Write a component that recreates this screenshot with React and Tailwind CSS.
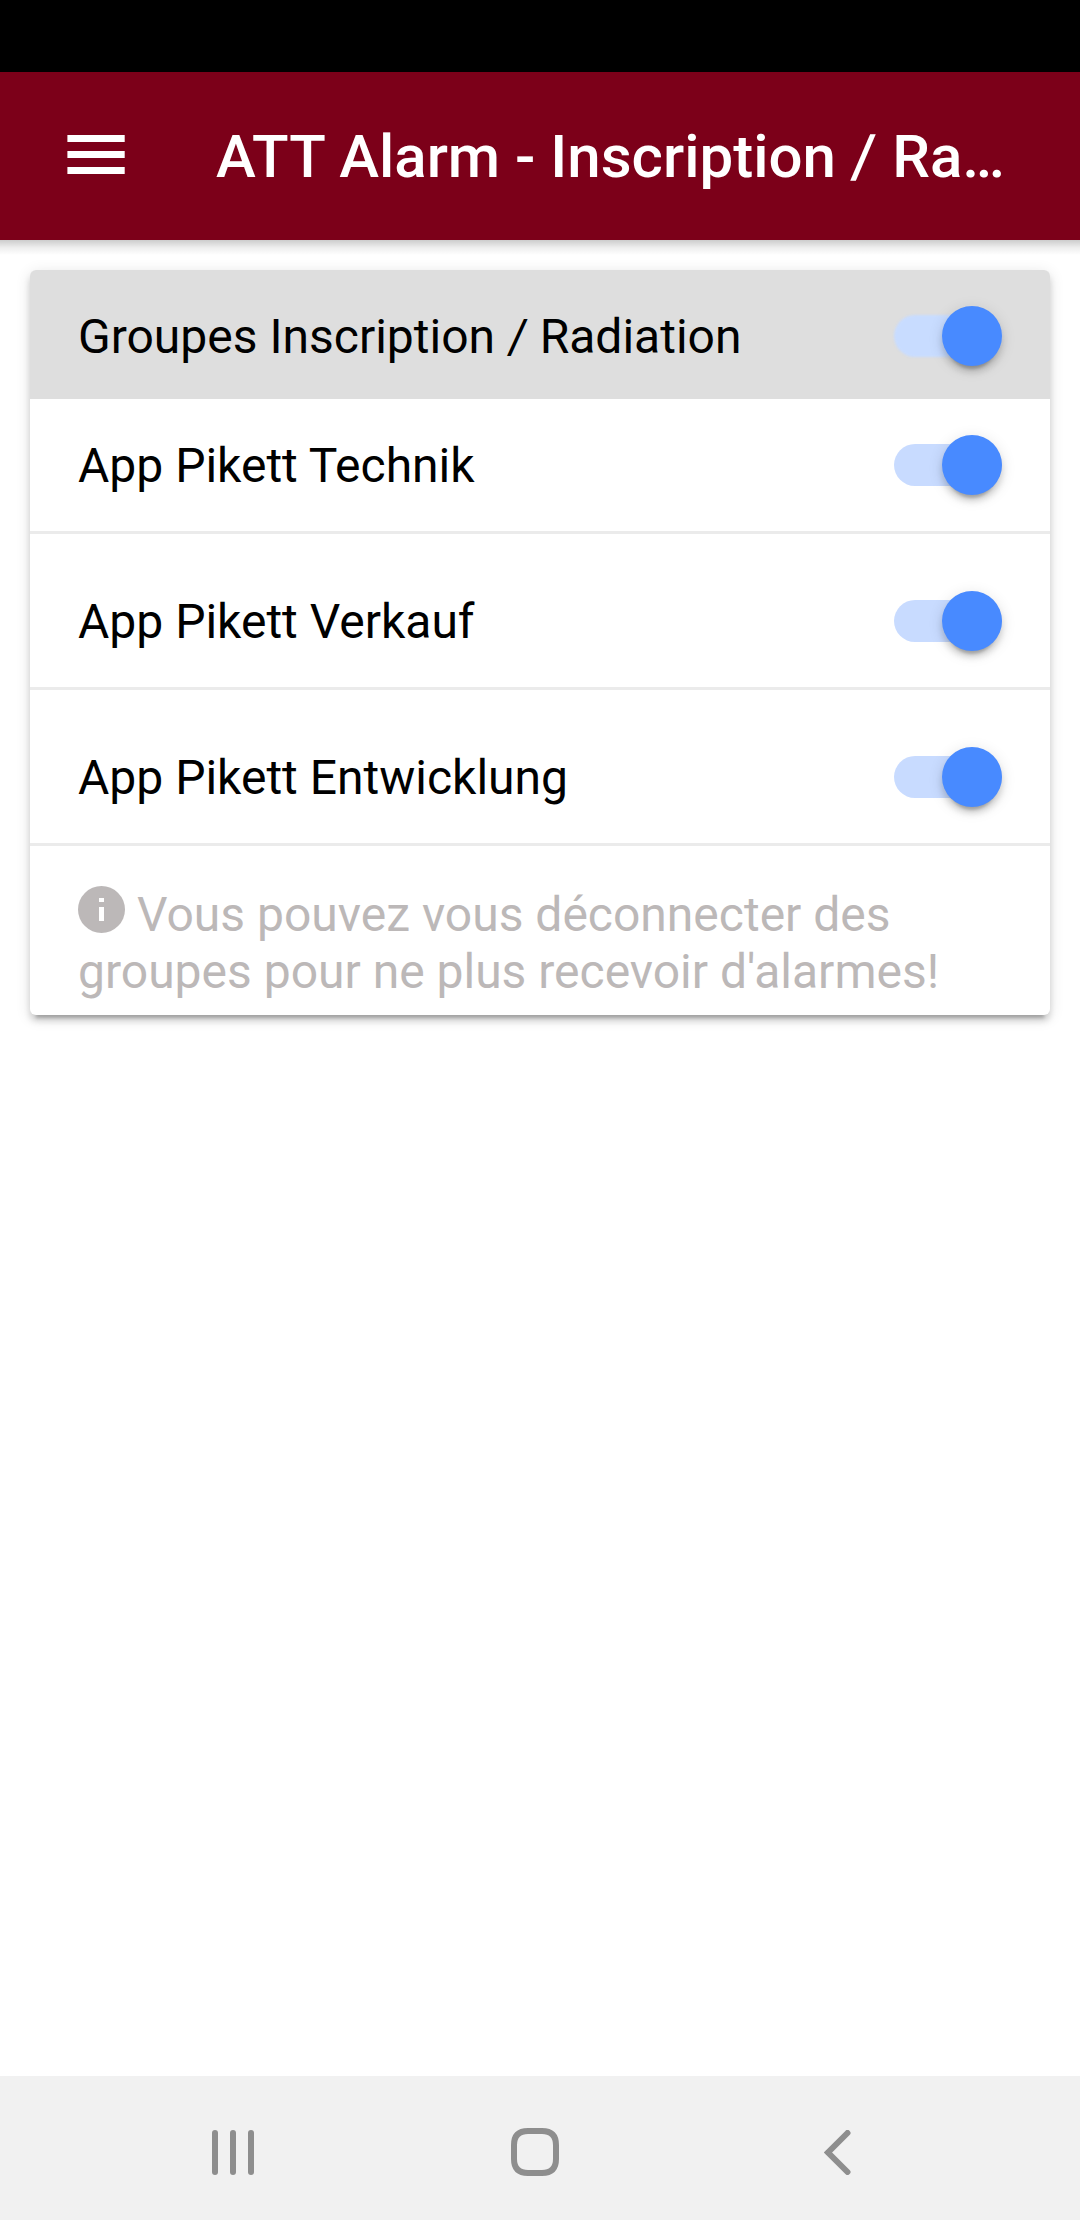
function Toggle({ soft }) {
  return (
    <div className="relative h-[60px] w-[108px] shrink-0">
      <div
        className={
          soft
            ? "absolute inset-x-0 top-[9px] h-[42px] rounded-full bg-[#c8dcff] blur-[1px]"
            : "absolute inset-x-0 top-[9px] h-[42px] rounded-full bg-[#c8dbff]"
        }
      />
      <div className="absolute right-0 top-0 size-[60px] rounded-full bg-[#488aff] shadow-[0_9px_3px_-6px_rgba(0,0,0,0.2),0_6px_6px_0_rgba(0,0,0,0.14),0_3px_15px_0_rgba(0,0,0,0.12)]" />
    </div>
  );
}

const groups = ["App Pikett Technik", "App Pikett Verkauf", "App Pikett Entwicklung"];

export default function App() {
  return (
    <div className="flex h-[2220px] w-[1080px] flex-col overflow-hidden bg-white font-[Roboto,sans-serif] text-[48px] leading-[57px] text-black">
      <div className="h-[72px] shrink-0 bg-black" />
      <header className="relative z-10 flex h-[168px] shrink-0 items-center bg-[#7c0019] pl-[67px] text-white">
        <svg className="mb-[3px]" width="58" height="39" viewBox="0 0 58 39" fill="currentColor">
          <path d="M.4 0h57.300v7H.4zM.4 16h57.300v7H.4zM.4 32h57.300v7H.4z" />
        </svg>
        <h1 className="ml-[91px] w-[800px] truncate pt-[2px] text-[60px] font-medium leading-[72px]">
          ATT Alarm - Inscription{" "}
          <span className="ml-[1.5px] mr-[1.5px] inline-block -skew-x-4">/</span> Radiation
        </h1>
        <div className="absolute inset-x-0 top-full h-[15px] bg-linear-to-b from-black/20 via-black/7 to-transparent" />
      </header>
      <main className="flex-1 px-[30px] pt-[30px]">
        <section className="h-[745px] rounded-[6px] bg-white shadow-[0_6px_6px_0_rgba(0,0,0,0.14),0_9px_3px_-6px_rgba(0,0,0,0.2),0_3px_15px_0_rgba(0,0,0,0.12)]">
          <div className="flex h-[129px] items-center justify-between rounded-t-[6px] bg-[#dedede] px-12 pt-[3px]">
            <span>
              Groupes Inscription <span className="ml-[1px] inline-block -skew-x-4">/</span> Radiation
            </span>
            <Toggle soft />
          </div>
          {groups.map((name, i) => (
            <div
              key={name}
              className={
                i === 0
                  ? "flex h-[135px] items-center justify-between border-b-[3px] border-[#ebebeb] px-12"
                  : "flex h-[156px] items-center justify-between border-b-[3px] border-[#ebebeb] px-12 pt-[21px]"
              }
            >
              <span>{name}</span>
              <Toggle />
            </div>
          ))}
          <p className="px-12 pt-[40px] text-[#bcb8b8]">
            <svg className="mr-3 inline-block align-[-2px]" width="47" height="47" viewBox="0 0 47 47">
              <circle cx="23.5" cy="23.5" r="23.5" fill="currentColor" />
              <path d="M21 12h5v4h-5zM21 21h5v14h-5z" fill="white" />
            </svg>
            Vous pouvez vous déconnecter des groupes pour ne plus recevoir d'alarmes!
          </p>
        </section>
      </main>
      <nav className="flex h-36 shrink-0 items-center bg-[#f1f1f1] pt-[8px] text-[#8e8e8e]">
        <svg className="ml-[212px]" width="42" height="45" viewBox="0 0 42 45" fill="currentColor">
          <rect width="6" height="45" rx="3" />
          <rect x="18" width="6" height="45" rx="3" />
          <rect x="36" width="6" height="45" rx="3" />
        </svg>
        <svg className="ml-[257px]" width="48" height="48" viewBox="0 0 48 48" fill="none" stroke="currentColor" strokeWidth="6">
          <path d="M17 3H31Q45 3 45 17V31Q45 45 31 45H17Q3 45 3 31V17Q3 3 17 3Z" />
        </svg>
        <svg className="ml-[265px]" width="27" height="45" viewBox="0 0 27 45" fill="none" stroke="currentColor" strokeWidth="6" strokeLinecap="round">
          <path d="M23.5 3L4 22.500L23.5 42" />
        </svg>
      </nav>
    </div>
  );
}
